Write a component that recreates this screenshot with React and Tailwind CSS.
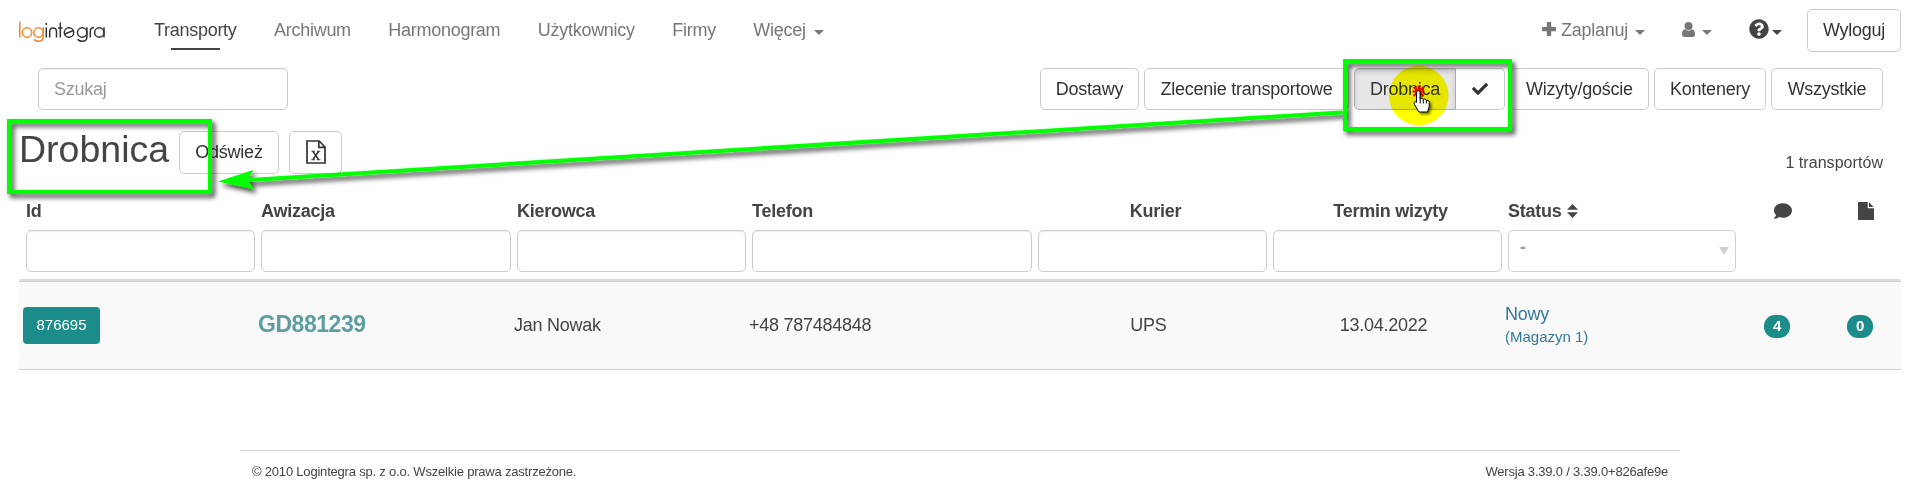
import { FaCheck, FaComment, FaQuestionCircle } from 'react-icons/fa';

const NAV_ITEMS = ['Archiwum', 'Harmonogram', 'Użytkownicy', 'Firmy'];

const Caret = ({ className = '' }) => (
    <svg width="10" height="5" viewBox="0 0 10 5" className={className}>
        <path d="M0 0h10L5 5z" fill="currentColor" />
    </svg>
);

const PlusIcon = () => (
    <svg width="14" height="14" viewBox="0 0 14 14" fill="currentColor" className="mr-[5px] -mt-0.5">
        <path d="M5.500 0h3q.7 0 .7.7v4.300h4.100q.7 0 .7.7v2.800q0 .7-.7.7H9.200v4.100q0 .7-.7.7h-3q-.7 0-.7-.7V9.200H.7Q0 9.200 0 8.500V5.700Q0 5 .7 5h4.100V.7q0-.7.7-.7z" />
    </svg>
);

const UserIcon = () => (
    <svg width="13" height="15" viewBox="0 0 13 15" fill="currentColor" className="-mt-0.5">
        <ellipse cx="6.500" cy="4" rx="4" ry="4" />
        <path d="M3 7.300c1.800 1.800 5.200 1.800 7 0 2.300.3 3 2.400 3 5.200 0 1.500-.8 2.500-2.200 2.500H2.200C.8 15 0 14 0 12.500c0-2.800.7-4.900 3-5.200z" />
    </svg>
);

const FileIcon = () => (
    <svg width="16" height="18" viewBox="0 0 16 18" fill="currentColor">
        <path d="M0 0h9.700v6.300H16V18H0z" />
        <path d="M11 .3L15.700 5H11z" />
    </svg>
);

const SortIcon = () => (
    <svg width="11" height="14" viewBox="0 0 11 14" fill="currentColor" className="ml-[5px]">
        <path d="M5.500 0L11 5.700H0zM0 8.300h11L5.500 14z" />
    </svg>
);

const Button = ({ className = 'h-[42px]', children }) => (
    <button className={`flex items-center justify-center rounded-[5px] border border-[#ccc] bg-white text-[#333] whitespace-nowrap ${className}`}>
        {children}
    </button>
);

const FilterInput = () => (
    <input className="block h-[42px] w-full rounded-[5px] border border-[#ccc] bg-white px-4 shadow-[inset_0_1px_1px_rgba(0,0,0,0.075)]" />
);

const Badge = ({ className, children }) => (
    <span className={`flex h-[23px] w-[26px] items-center justify-center rounded-[11px] bg-[#1b8c89] text-[15px] font-bold text-white ${className}`}>
        {children}
    </span>
);

const Logo = () => (
    <svg width="86" height="24" viewBox="0 0 86 24" fill="none" strokeWidth="1.5" className="mt-1">
        <g stroke="#f58634">
            <path d="M.8 1.500v16" />
            <circle cx="8" cy="12.500" r="4.700" />
            <circle cx="19.500" cy="12.500" r="4.700" />
            <path d="M24.200 7.200v9.800c0 3-2 4.300-4.700 4.300-2.200 0-3.700-.8-4.400-2.200" />
        </g>
        <g stroke="#333">
            <path d="M27.300 7.500v10M27.300 3v2" />
            <path d="M30.700 17.500v-5.700c0-5 6.800-5 6.800 0v5.700" />
            <path d="M41.300 2.500v15M39 8h4.700" />
            <circle cx="50" cy="12.500" r="4.700" />
            <path d="M45.300 14.300l9.200-3.800" />
            <circle cx="63.200" cy="12.500" r="4.700" />
            <path d="M67.900 7.200v9.800c0 3-2 4.300-4.700 4.300-2.200 0-3.700-.8-4.400-2.200" />
            <path d="M71.300 17.500v-6c0-2.500 1.200-4 3.700-4" />
            <circle cx="80.300" cy="12.500" r="4.700" />
            <path d="M85 7.200v10.300" />
        </g>
    </svg>
);

function Navbar() {
    return (
        <nav className="flex h-[60px] items-center pl-[19px] pr-[15px] text-[#777]">
            <Logo />
            <div className="ml-[49px] flex h-full items-center gap-[37.5px] tracking-[-0.28px]">
                <a className="flex h-full flex-col items-center pt-[15px] text-[#444]">
                    <span className="leading-[30px]">Transporty</span>
                    <span className="mt-[3px] h-0.5 w-[49px] bg-[#444]" />
                </a>
                {NAV_ITEMS.map((item) => (
                    <a key={item}>{item}</a>
                ))}
                <a className="flex items-center">
                    Więcej <Caret className="ml-2 mt-1" />
                </a>
            </div>
            <div className="ml-auto flex items-center">
                <a className="flex items-center">
                    <PlusIcon /> Zaplanuj <Caret className="ml-[7px] mt-1" />
                </a>
                <a className="ml-[37px] flex items-center">
                    <UserIcon /> <Caret className="ml-[7px] mt-1" />
                </a>
                <a className="ml-[37px] mr-[25px] flex items-center text-[#444]">
                    <FaQuestionCircle className="-mt-0.5 size-5" /> <Caret className="ml-[3px] mt-1" />
                </a>
                <Button className="h-[43px] w-[94px]">Wyloguj</Button>
            </div>
        </nav>
    );
}

function Toolbar() {
    return (
        <div className="mt-2 flex h-[42px] items-center justify-between pl-[38px] pr-[33px]">
            <input
                placeholder="Szukaj"
                className="h-[42px] w-[250px] rounded-[5px] border border-[#ccc] px-[15px] shadow-[inset_0_1px_1px_rgba(0,0,0,0.075)] placeholder:text-[#999]"
            />
            <div className="flex gap-[5px]">
                <Button className="h-[42px] w-[99px]">Dostawy</Button>
                <Button className="h-[42px] w-[205px]">Zlecenie transportowe</Button>
                <div className="flex">
                    <button className="h-[42px] w-[102px] rounded-l-[5px] border border-[#adadad] bg-[#e6e6e6] text-[#333] shadow-[inset_0_3px_5px_rgba(0,0,0,0.125)]">
                        Drobnica
                    </button>
                    <button className="flex h-[42px] w-[49px] items-center justify-center rounded-r-[5px] border border-l-0 border-[#ccc] text-[#333]">
                        <FaCheck className="size-4" />
                    </button>
                </div>
                <Button className="h-[42px] w-[139px]">Wizyty/goście</Button>
                <Button className="h-[42px] w-28">Kontenery</Button>
                <Button className="h-[42px] w-28">Wszystkie</Button>
            </div>
        </div>
    );
}

function PageHeader() {
    return (
        <div className="mt-[21px] flex h-[62px] items-start pl-[19px] pr-[33px]">
            <h1 className="-mt-1 w-[149px] text-[37.5px] leading-[44px] tracking-normal">Drobnica</h1>
            <Button className="ml-[11px] h-[43px] w-[100px]">Odśwież</Button>
            <Button className="ml-2.5 h-[43px] w-[53px]">
                <svg width="20" height="24" viewBox="0 0 20 24" fill="none" stroke="#333" strokeWidth="1.700" className="-mt-0.5">
                    <path d="M1 1h12.200l5.800 6v16H1zM12.800 1v6.300H19" />
                    <path d="M7 11.500l5.500 8M12.500 11.500l-5.500 8" strokeWidth="1.500" />
                    <path d="M5.500 11.300h3.300M11 11.300h3.200M5.300 19.700h3.500M10.800 19.700h3.600" strokeWidth="1.100" />
                </svg>
            </Button>
            <span className="ml-auto mt-5 text-base leading-6 tracking-[0.05px]">1 transportów</span>
        </div>
    );
}

function TransportsTable() {
    return (
        <table className="mx-[19px] w-[1882px] table-fixed border-separate border-spacing-0 text-left">
            <colgroup>
                <col className="w-[236px]" />
                <col className="w-[256px]" />
                <col className="w-[235px]" />
                <col className="w-[286px]" />
                <col className="w-[235px]" />
                <col className="w-[235px]" />
                <col className="w-[234px]" />
                <col className="w-[84px]" />
                <col />
            </colgroup>
            <thead>
                <tr className="h-9 [&>th]:pl-1.5 [&>th]:font-bold [&>th:first-child]:pl-[7px]">
                    <th>Id</th>
                    <th>Awizacja</th>
                    <th>Kierowca</th>
                    <th>Telefon</th>
                    <th className="text-center"><span className="ml-1.5">Kurier</span></th>
                    <th className="text-center"><span className="ml-1.5">Termin wizyty</span></th>
                    <th>
                        <span className="flex items-center">
                            Status <SortIcon />
                        </span>
                    </th>
                    <th><FaComment className="ml-8 size-[18px]" /></th>
                    <th><div className="ml-8"><FileIcon /></div></th>
                </tr>
                <tr className="h-[52px] align-top [&>td]:border-b-2 [&>td]:border-[#ddd] [&>td]:pl-1.5 [&>td]:pt-px [&>td:first-child]:pl-[7px]">
                    <td><FilterInput /></td>
                    <td><FilterInput /></td>
                    <td><FilterInput /></td>
                    <td><FilterInput /></td>
                    <td><FilterInput /></td>
                    <td><FilterInput /></td>
                    <td>
                        <div className="flex h-[42px] items-center justify-between rounded-[5px] border border-[#d0d0d0] pl-[11px] pr-1.5 font-bold text-[#999]">
                            <span className="-mt-2">-</span>
                            <svg width="10" height="8" viewBox="0 0 10 8"><path d="M0 0h10L5 8z" fill="#d0d0d0" /></svg>
                        </div>
                    </td>
                    <td />
                    <td />
                </tr>
            </thead>
            <tbody>
                <tr className="h-[89px] bg-[#f9f9f9] [&>td]:border-y [&>td]:border-[#d0d0d0] [&>td]:pl-[3px]">
                    <td>
                        <span className="ml-px flex h-[37px] w-[77px] items-center justify-center rounded-[4px] bg-[#1b8c89] text-[15px] tracking-normal text-white">876695</span>
                    </td>
                    <td className="pb-0.5 text-[23px] font-bold tracking-[-0.45px] text-[#5f9ea0]">GD881239</td>
                    <td>Jan Nowak</td>
                    <td>+48 787484848</td>
                    <td className="pr-[5px] text-center">UPS</td>
                    <td className="pr-[5px] text-center">13.04.2022</td>
                    <td className="pb-0.5 text-[#31799b]">
                        <div className="leading-6">Nowy</div>
                        <div className="text-[15px] leading-[22px] tracking-normal">(Magazyn 1)</div>
                    </td>
                    <td><Badge className="mt-0.5 ml-[25px]">4</Badge></td>
                    <td><Badge className="mt-0.5 ml-6">0</Badge></td>
                </tr>
            </tbody>
        </table>
    );
}

// Green frames, arrow and click marker drawn over the page
function Annotations() {
    return (
        <svg className="pointer-events-none absolute left-0 top-0" width="1916" height="503" viewBox="0 0 1916 503">
            <defs>
                <filter id="shadow" filterUnits="userSpaceOnUse" x="0" y="0" width="1916" height="503">
                    <feDropShadow dx="3" dy="3.500" stdDeviation="2.800" floodColor="#000" floodOpacity="0.75" />
                </filter>
                <filter id="cursorShadow" x="-50%" y="-50%" width="200%" height="200%">
                    <feDropShadow dx="2" dy="2" stdDeviation="1" floodColor="#000" floodOpacity="0.5" />
                </filter>
            </defs>
            <circle cx="1418.700" cy="95.500" r="29.800" fill="#ff0" className="mix-blend-multiply" />
            <g filter="url(#shadow)" fill="none" stroke="#0f0" strokeWidth="4">
                <path d="M1341 112.500L250 180" strokeLinecap="round" />
                <path d="M218 181.500l35-11.500-5 10 6 9.500z" fill="#0f0" stroke="none" />
                <rect x="9" y="121" width="201" height="71" />
                <rect x="1345" y="61" width="165" height="68" />
            </g>
            <path d="M1413.500 87l10 9M1423.500 87l-10 9M1418.500 85.500v11M1412.500 91.500h12" stroke="#f00" strokeWidth="2" />
            <path
                d="M1416.500 92.500c0-2.300 3.500-2.300 3.500 0v6.500c.8-1.200 2.800-.9 3.200.5 .9-.9 2.700-.5 3 1 1-.8 3-.2 3 1.800v4.200l-1.700 5.500h-8.500l-4.500-7.500c-1.200-2 .3-3.700 2-2.200z"
                fill="#fff"
                stroke="#000"
                filter="url(#cursorShadow)"
            />
            <path d="M1420.200 99v4.500M1423.300 100v3.500M1426.300 101v2.500" stroke="#000" />
        </svg>
    );
}

export default function App() {
    return (
        <div className="relative h-[503px] w-[1916px] overflow-hidden bg-white font-['Liberation_Sans',Arial,sans-serif] text-[18px] tracking-[-0.25px] text-[#444]">
            <Navbar />
            <Toolbar />
            <PageHeader />
            <TransportsTable />
            <footer className="ml-60 mt-20 flex w-[1440px] justify-between border-t border-[#d3d3d3] px-3 pt-[11px] text-[13px] tracking-[-0.2px]">
                <span>© 2010 Logintegra sp. z o.o. Wszelkie prawa zastrzeżone.</span>
                <span>Wersja 3.39.0 / 3.39.0+826afe9e</span>
            </footer>
            <Annotations />
        </div>
    );
}
